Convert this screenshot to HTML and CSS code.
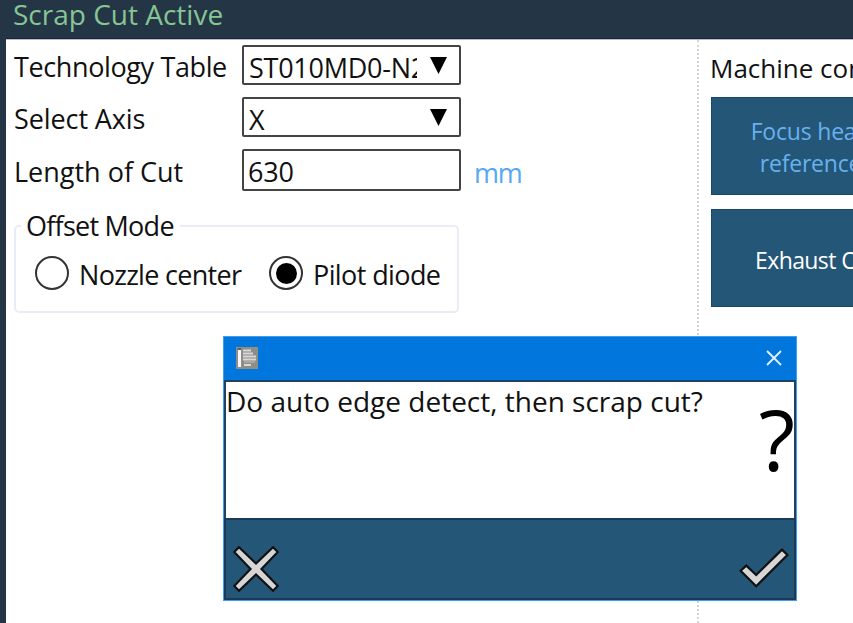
FILE: index.html
```html
<!DOCTYPE html>
<html lang="en">
<head>
<meta charset="utf-8">
<title>Scrap Cut</title>
<link rel="stylesheet" href="styles.css">
</head>
<body>
<div class="app">
  <header class="titlebar"><h1 class="title">Scrap Cut Active</h1></header>
  <main class="workspace">
    <section class="settings">
      <div class="row row-table">
        <span class="label label-table">Technology Table</span>
        <div class="field"><span class="value">ST010MD0-N2</span><svg class="arrow" viewBox="0 0 17 17"><path d="M0 0H17L8.5 17Z"/></svg></div>
      </div>
      <div class="row row-axis">
        <span class="label label-axis">Select Axis</span>
        <div class="field"><span class="value">X</span><svg class="arrow" viewBox="0 0 17 17"><path d="M0 0H17L8.5 17Z"/></svg></div>
      </div>
      <div class="row row-length">
        <span class="label label-length">Length of Cut</span>
        <div class="field field-input"><span class="value">630</span></div>
        <span class="unit">mm</span>
      </div>
      <fieldset class="offset">
        <legend>Offset Mode</legend>
        <div class="options">
          <span class="radio"></span><span class="opt opt-nozzle">Nozzle center</span>
          <span class="radio on"></span><span class="opt opt-pilot">Pilot diode</span>
        </div>
      </fieldset>
    </section>
    <aside class="machine">
      <h2 class="machine-title">Machine control</h2>
      <div class="btn btn-focus"><span>Focus head</span><span>reference</span></div>
      <div class="btn btn-exhaust"><span>Exhaust On</span></div>
    </aside>
  </main>
</div>
<div class="dialog">
  <div class="dialog-bar">
    <svg class="app-icon" viewBox="0 0 22 22"><rect width="22" height="22" fill="#8f8d88"/><path d="M2 3H5V20H2Z" fill="#f4f6f8"/><path d="M1.5 2H5" stroke="#555" stroke-width="1.6"/><path d="M7 3.5H15M7 6.5H17M7 9.5H20M7 12.5H20M8 18H15" stroke="#d8d8d8" stroke-width="1.8"/><path d="M8 15H19" stroke="#b5b3af" stroke-width="1.4"/></svg>
    <svg class="close" viewBox="0 0 16 16"><path d="M1 1L15 15M15 1L1 15" stroke="#e6f2ff" stroke-width="1.8"/></svg>
  </div>
  <div class="dialog-body">
    <p class="message">Do auto edge detect, then scrap cut?</p>
    <span class="question">?</span>
  </div>
  <div class="dialog-foot">
    <svg class="cancel" viewBox="0 0 46 46"><path d="M6 1.2L23 17.5L40 1.2L44.8 6L28.5 23L44.8 40L40 44.8L23 28.5L6 44.8L1.2 40L17.5 23L1.2 6Z" fill="#d6d6d6" stroke="#111" stroke-width="2.2"/></svg>
    <svg class="ok" viewBox="0 0 50 40"><path d="M1.6 22.8L7.3 17.6L17.2 27L43 1.6L48.4 7L17.2 38.2Z" fill="#d6d6d6" stroke="#111" stroke-width="2.2"/></svg>
  </div>
</div>
</body>
</html>
```
FILE: styles.css
```css
* { box-sizing: border-box; }
body { margin: 0; width: 853px; height: 623px; overflow: hidden; background: #fff; color: #111; font: 27px/36px "Open Sans", "Noto Sans", sans-serif; }
svg { display: block; flex: none; }
h1, h2, p { margin: 0; font: inherit; }
span, h1, h2, p, legend { white-space: nowrap; }
.app { height: 623px; display: flex; flex-direction: column; background: #243546; border-left: 6px solid #243546; }
.titlebar { height: 39px; flex: none; padding: 0 0 0 7px; border-bottom: 1px solid #1c2438; }
.title { color: #86c594; font-size: 28px; line-height: 29px; }
.workspace { flex: 1; display: flex; background: #fff; border-top: 1px solid #b9bccd; }
.settings { width: 691px; flex: none; padding: 5px 0 0 8px; }
.row { display: flex; }
.row-table, .row-axis { height: 52px; }
.row-length { height: 59px; }
.label { width: 228px; padding-top: 4px; flex: none; }
.label-table { letter-spacing: -0.38px; }
.label-axis { letter-spacing: -0.1px; }
.label-length { padding-top: 5px; }
.field { width: 219px; height: 40px; border: 2px solid #444; border-radius: 2px; display: flex; justify-content: space-between; padding: 3px 12px 0 5px; }
.field-input { height: 42px; padding-left: 4px; }
.value { width: 168px; overflow: hidden; letter-spacing: -0.25px; }
.arrow { width: 17px; height: 17px; margin-top: 7px; }
.unit { color: #56a8f5; margin: 6px 0 0 13px; letter-spacing: -1.2px; }
.offset { width: 445px; height: 105px; margin: 0; border: 2px solid #e9ebf6; border-radius: 5px; padding: 0; }
legend { margin-left: 5px; padding: 0 6px 0 5px; height: 36px; letter-spacing: -0.75px; }
.options { display: flex; align-items: flex-start; padding: 12px 0 0 19px; }
.radio { width: 34px; height: 34px; border: 2px solid #333; border-radius: 50%; flex: none; display: grid; place-items: center; }
.on::after { content: ""; width: 21px; height: 21px; border-radius: 50%; background: #000; }
.opt { margin-left: 10px; padding-top: 1px; letter-spacing: -0.6px; }
.opt-nozzle { width: 190px; letter-spacing: -0.7px; }
.machine { flex: 1; border-left: 2px dotted #d6d6d6; padding: 10px 0 0 11px; overflow: hidden; }
.machine-title { font-size: 26px; height: 47px; }
.btn { width: 213px; height: 98px; margin-left: 1px; background: #245678; border: 1px solid #154a6c; display: flex; flex-direction: column; align-items: center; justify-content: center; font-size: 23px; line-height: 32px; color: #68b1ef; }
.btn-focus { margin-bottom: 14px; padding: 2px 14px 0 0; letter-spacing: -0.2px; }
.btn-exhaust { color: #fff; padding: 4px 8px 0 0; letter-spacing: -0.6px; }
.dialog { position: absolute; left: 223px; top: 336px; width: 574px; height: 265px; border: 1px solid #3d9df0; background: #0177dd; display: flex; flex-direction: column; }
.dialog-bar { height: 43px; display: flex; justify-content: space-between; padding: 10px 14px 0 12px; flex: none; }
.app-icon { width: 22px; height: 22px; }
.close { width: 16px; height: 16px; margin-top: 3px; }
.dialog-body { height: 138px; flex: none; background: #fff; border: solid #1f4260; border-width: 2px 2px 0 2px; display: flex; justify-content: space-between; }
.message { padding: 1px 0 0; font-size: 28px; line-height: 36px; }
.question { font-size: 84px; line-height: 84px; color: #000; padding-top: 15px; margin-right: -1px; }
.dialog-foot { flex: 1; background: #245678; border: 2px solid #193a58; display: flex; justify-content: space-between; padding: 26px 5px 0 7px; }
.cancel { width: 46px; height: 46px; }
.ok { width: 50px; height: 40px; margin-top: 2px; }
```
